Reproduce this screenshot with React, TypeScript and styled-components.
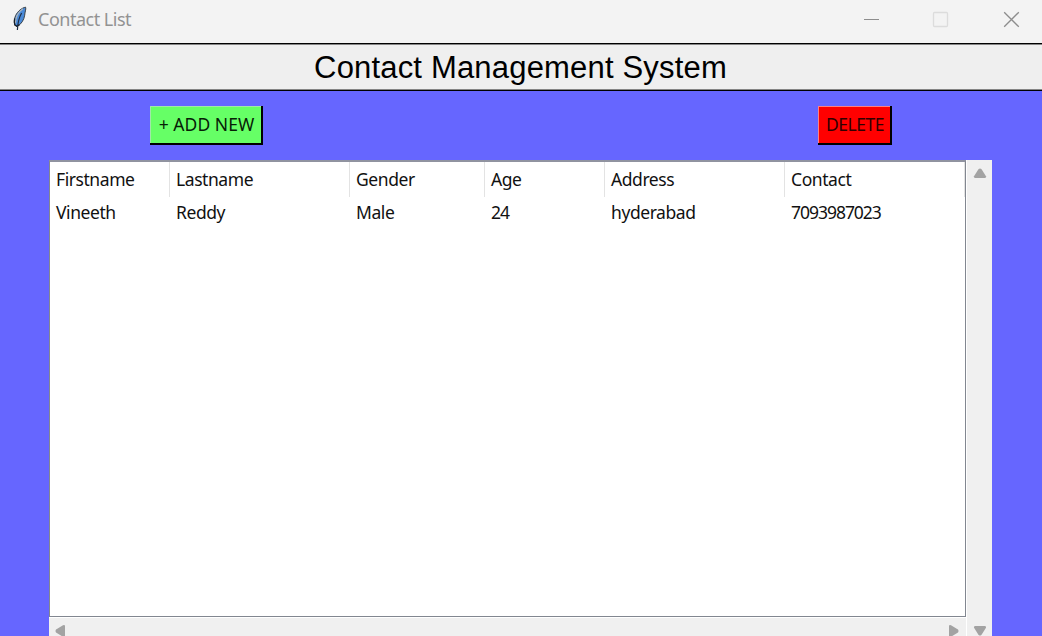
import React from 'react';
import styled, { createGlobalStyle } from 'styled-components';

const Global = createGlobalStyle`
  * { box-sizing: border-box; }
  body { margin: 0; overflow: hidden; background: #6666ff; }
`;

const Window = styled.div`
  width: 1042px;
  height: 636px;
  overflow: hidden;
  display: flex;
  flex-direction: column;
  background: #6666ff;
  font-family: 'Noto Sans', 'Open Sans', sans-serif;
  color: #111;
`;

const TitleBar = styled.header`
  height: 43px;
  flex: none;
  display: flex;
  align-items: flex-start;
  background: #f3f3f3;
  padding-left: 12px;
`;

const FeatherIcon = styled.svg`
  width: 16px;
  height: 26px;
  margin-top: 6px;
  flex: none;
`;

const WindowTitle = styled.span`
  margin-left: 10px;
  line-height: 38px;
  font-size: 18px;
  letter-spacing: -0.5px;
  color: #929292;
  flex: 1;
`;

const WindowControls = styled.svg`
  width: 182px;
  height: 40px;
  flex: none;
`;

const Banner = styled.div`
  height: 48px;
  flex: none;
  border-top: 1px solid #000;
  border-bottom: 1px solid #000;
  box-shadow: inset 0 1px #858585, inset 0 -1px #858585;
  background: #efefef;
  display: flex;
  justify-content: center;
`;

const Heading = styled.h1`
  margin: 0;
  padding-right: 1px;
  font: 400 31px/48px 'Liberation Sans', Arial, sans-serif;
  letter-spacing: 0.18px;
  color: #000;
`;

const Toolbar = styled.div`
  display: flex;
  justify-content: space-between;
  height: 69px;
  flex: none;
  padding: 15px 150px 0 150px;
`;

const ToolButton = styled.button<{
  $fill: string;
  $light: string;
  $ink: string;
  $width: number;
  $tracking: number;
}>`
  width: ${(p) => p.$width}px;
  height: 39px;
  padding: 0 0 2px;
  border: 0;
  background: ${(p) => p.$fill};
  box-shadow: inset -2px -2px #000, inset 1px 1px ${(p) => p.$light};
  color: ${(p) => p.$ink};
  font: 17.5px/37px 'Noto Sans', 'Open Sans', sans-serif;
  letter-spacing: ${(p) => p.$tracking}px;
  white-space: nowrap;
`;

const Frame = styled.main`
  display: grid;
  grid-template-columns: 917px 26px;
  grid-template-rows: 457px 19px;
  margin-left: 49px;
`;

const TableBox = styled.div`
  background: #fff;
  border: 1px solid #828790;
  border-top-width: 2px;
  border-top-color: #9093a0;
`;

const Row = styled.div<{ $header?: boolean }>`
  display: grid;
  grid-template-columns: 120px 180px 135px 120px 180px 180px;
  height: ${(p) => (p.$header ? 35 : 30)}px;
  line-height: ${(p) => (p.$header ? 35 : 31)}px;
`;

const Cell = styled.div<{ $divided?: boolean; $numeric?: boolean }>`
  padding-left: 6px;
  border-right: 1px solid ${(p) => (p.$divided ? '#e3e3e3' : 'transparent')};
  font-size: 17.5px;
  letter-spacing: ${(p) => (p.$numeric ? -1.03 : -0.43)}px;
  white-space: nowrap;
`;

const ScrollTrack = styled.div<{ $vertical?: boolean }>`
  display: flex;
  flex-direction: ${(p) => (p.$vertical ? 'column' : 'row')};
  justify-content: space-between;
  align-items: ${(p) => (p.$vertical ? 'center' : 'flex-start')};
  grid-row: ${(p) => (p.$vertical ? '1 / 3' : '2')};
  grid-column: ${(p) => (p.$vertical ? '2' : '1')};
  padding: ${(p) => (p.$vertical ? '8px 0 0 1px' : '7px 6px 0 5px')};
  background: #f0f0f0;
  box-shadow: ${(p) => (p.$vertical ? 'inset 1px 0 #fff' : 'inset 0 1px #fff')};
`;

const Arrow = styled.svg`
  display: block;
  flex: none;
  fill: #a3a3a3;
`;

const columns = ['Firstname', 'Lastname', 'Gender', 'Age', 'Address', 'Contact'];
const contacts = [['Vineeth', 'Reddy', 'Male', '24', 'hyderabad', '7093987023']];

export default function App() {
  return (
    <Window>
      <Global />
      <TitleBar>
        <FeatherIcon viewBox="0 0 16 26">
          <path d="M13.6 1.2C10 1.8 5.8 5 3.6 9.6C2.2 12.8 2 16.2 2.7 19L5 20.6C9.4 18.2 12 13.8 12.7 9.2C12.8 6 14.3 3.4 13.6 1.2Z" fill="#4a8ad8" stroke="#3a4046" strokeWidth="1" />
          <path d="M11 2.8C6.8 5.6 3.6 11 3.3 17.5" fill="none" stroke="#a9b4bd" strokeWidth="1.2" />
          <path d="M2.6 12.5C2.2 15 2.3 17.3 2.9 19L5 20.3L7.4 18.6" fill="none" stroke="#182028" strokeWidth="1.3" />
          <path d="M9.6 7C7.3 11 5.7 16 5.4 24" fill="none" stroke="#1c2c44" strokeWidth="1.2" />
        </FeatherIcon>
        <WindowTitle>Contact List</WindowTitle>
        <WindowControls viewBox="0 0 182 40" fill="none">
          <path d="M4 19.5H19" stroke="#8d8d8d" />
          <rect x="73.5" y="12.5" width="14" height="14" rx="1" stroke="#dcdcdc" strokeWidth="1.3" />
          <path d="M144.2 12.2L158.8 26.8M158.8 12.2L144.2 26.8" stroke="#8d8d8d" strokeWidth="1.3" />
        </WindowControls>
      </TitleBar>
      <Banner>
        <Heading>Contact Management System</Heading>
      </Banner>
      <Toolbar>
        <ToolButton $fill="#66ff66" $light="#a0e8a8" $ink="#062006" $width={113} $tracking={0.05}>+ ADD NEW</ToolButton>
        <ToolButton $fill="#ff0000" $light="#ff8080" $ink="#300000" $width={74} $tracking={-0.5}>DELETE</ToolButton>
      </Toolbar>
      <Frame>
        <TableBox>
          <Row $header>
            {columns.map((name) => (
              <Cell key={name} $divided>{name}</Cell>
            ))}
          </Row>
          {contacts.map((contact) => (
            <Row key={contact[5]}>
              {contact.map((value) => (
                <Cell key={value} $numeric={/^\d+$/.test(value)}>{value}</Cell>
              ))}
            </Row>
          ))}
        </TableBox>
        <ScrollTrack $vertical>
          <Arrow width="14" height="10"><path d="M5.6 1Q7 0 8.4 1L13 8.2Q13.3 10 12 10H2Q.7 10 1 8.2Z" /></Arrow>
          <Arrow width="14" height="10"><path d="M5.6 9Q7 10 8.4 9L13 1.8Q13.3 0 12 0H2Q.7 0 1 1.8Z" /></Arrow>
        </ScrollTrack>
        <ScrollTrack>
          <Arrow width="11" height="14"><path d="M2 5.6Q1 7 2 8.4L9 12.8Q11 13.3 11 12V2Q11 .7 9 1.2Z" /></Arrow>
          <Arrow width="11" height="14"><path d="M9 5.6Q10 7 9 8.4L2 12.8Q0 13.3 0 12V2Q0 .7 2 1.2Z" /></Arrow>
        </ScrollTrack>
      </Frame>
    </Window>
  );
}
